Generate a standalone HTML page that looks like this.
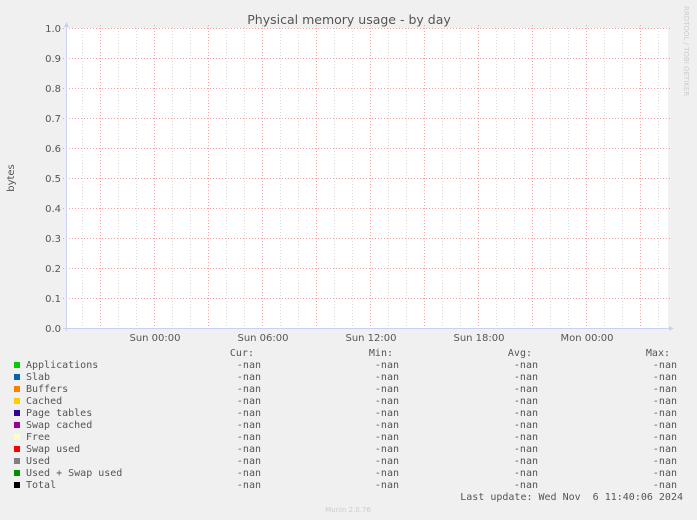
<!DOCTYPE html>
<html><head><meta charset="utf-8"><style>
html,body{margin:0;padding:0;background:#f0f0f0;}
svg{display:block}
.s{font-family:"DejaVu Sans","Liberation Sans",sans-serif;fill:#555}
.m{font-family:"DejaVu Sans Mono","Liberation Mono",monospace;font-size:10px;fill:#555}
</style></head><body>
<svg width="697" height="520" xmlns="http://www.w3.org/2000/svg">
<rect width="697" height="520" fill="#f0f0f0"/>
<rect x="66" y="28" width="602" height="300" fill="#fff"/>
<path d="M82 28V331M118 28V331M136 28V331M172 28V331M190 28V331M226 28V331M244 28V331M280 28V331M298 28V331M334 28V331M352 28V331M388 28V331M406 28V331M442 28V331M460 28V331M496 28V331M514 28V331M550 28V331M568 28V331M604 28V331M622 28V331M658 28V331" stroke="#d8d8d8" stroke-width="1" stroke-dasharray="1,2" fill="none" transform="translate(0.5,0)"/>
<path d="M100 25V331M154 25V331M208 25V331M262 25V331M316 25V331M370 25V331M424 25V331M478 25V331M532 25V331M586 25V331M640 25V331" stroke="#f4a0a0" stroke-width="1" stroke-dasharray="1,2" fill="none" transform="translate(0.5,0)"/>
<path d="M63 28H670M63 58H670M63 88H670M63 118H670M63 148H670M63 178H670M63 208H670M63 238H670M63 268H670M63 298H670M63 328H670" stroke="#f4a0a0" stroke-width="1" stroke-dasharray="1,2" fill="none" transform="translate(0,0.5)"/>
<path d="M66.5 26V331M63 328.5H672" stroke="#ccd0f0" stroke-width="1"/>
<path d="M64 27L66.5 22L69 27Z M669 326L674 328.5L669 331Z" fill="#ccd0f0"/>
<text class="s" x="349" y="24" font-size="12.5" text-anchor="middle">Physical memory usage - by day</text>
<g class="s" font-size="10" text-anchor="end">
<text x="61" y="32">1.0</text><text x="61" y="62">0.9</text><text x="61" y="92">0.8</text><text x="61" y="122">0.7</text><text x="61" y="152">0.6</text><text x="61" y="182">0.5</text><text x="61" y="212">0.4</text><text x="61" y="242">0.3</text><text x="61" y="272">0.2</text><text x="61" y="302">0.1</text><text x="61" y="332">0.0</text>
</g>
<g class="s" font-size="10" text-anchor="middle">
<text x="155" y="341">Sun 00:00</text><text x="263" y="341">Sun 06:00</text><text x="371" y="341">Sun 12:00</text><text x="479" y="341">Sun 18:00</text><text x="587" y="341">Mon 00:00</text>
</g>
<text class="s" font-size="10" transform="translate(14,178) rotate(-90)" text-anchor="middle">bytes</text>
<text class="s" font-size="7" style="fill:#ccc" transform="translate(684,6) rotate(90)">RRDTOOL / TOBI OETIKER</text>
<g class="m" text-anchor="end">
<text x="254" y="356">Cur:</text><text x="393" y="356">Min:</text><text x="532" y="356">Avg:</text><text x="670" y="356">Max:</text>
</g>
<g>
<rect x="14" y="362" width="6" height="6" fill="#00cc00"/>
<rect x="14" y="374" width="6" height="6" fill="#0066b3"/>
<rect x="14" y="386" width="6" height="6" fill="#ff8000"/>
<rect x="14" y="398" width="6" height="6" fill="#ffcc00"/>
<rect x="14" y="410" width="6" height="6" fill="#330099"/>
<rect x="14" y="422" width="6" height="6" fill="#990099"/>
<rect x="14" y="434" width="6" height="6" fill="#ffffcc"/>
<rect x="14" y="446" width="6" height="6" fill="#ff0000"/>
<rect x="14" y="458" width="6" height="6" fill="#808080"/>
<rect x="14" y="470" width="6" height="6" fill="#008f00"/>
<rect x="14" y="482" width="6" height="6" fill="#000000"/>
</g>
<g class="m">
<text x="26" y="368">Applications</text><text x="26" y="380">Slab</text><text x="26" y="392">Buffers</text><text x="26" y="404">Cached</text><text x="26" y="416">Page tables</text><text x="26" y="428">Swap cached</text><text x="26" y="440">Free</text><text x="26" y="452">Swap used</text><text x="26" y="464">Used</text><text x="26" y="476">Used + Swap used</text><text x="26" y="488">Total</text>
</g>
<g class="m" text-anchor="end">
<text x="261" y="368">-nan</text><text x="261" y="380">-nan</text><text x="261" y="392">-nan</text><text x="261" y="404">-nan</text><text x="261" y="416">-nan</text><text x="261" y="428">-nan</text><text x="261" y="440">-nan</text><text x="261" y="452">-nan</text><text x="261" y="464">-nan</text><text x="261" y="476">-nan</text><text x="261" y="488">-nan</text>
<text x="399" y="368">-nan</text><text x="399" y="380">-nan</text><text x="399" y="392">-nan</text><text x="399" y="404">-nan</text><text x="399" y="416">-nan</text><text x="399" y="428">-nan</text><text x="399" y="440">-nan</text><text x="399" y="452">-nan</text><text x="399" y="464">-nan</text><text x="399" y="476">-nan</text><text x="399" y="488">-nan</text>
<text x="538" y="368">-nan</text><text x="538" y="380">-nan</text><text x="538" y="392">-nan</text><text x="538" y="404">-nan</text><text x="538" y="416">-nan</text><text x="538" y="428">-nan</text><text x="538" y="440">-nan</text><text x="538" y="452">-nan</text><text x="538" y="464">-nan</text><text x="538" y="476">-nan</text><text x="538" y="488">-nan</text>
<text x="677" y="368">-nan</text><text x="677" y="380">-nan</text><text x="677" y="392">-nan</text><text x="677" y="404">-nan</text><text x="677" y="416">-nan</text><text x="677" y="428">-nan</text><text x="677" y="440">-nan</text><text x="677" y="452">-nan</text><text x="677" y="464">-nan</text><text x="677" y="476">-nan</text><text x="677" y="488">-nan</text>
<text x="683" y="500" xml:space="preserve">Last update: Wed Nov  6 11:40:06 2024</text>
</g>
<text class="s" x="348" y="512" font-size="7" text-anchor="middle" style="fill:#ccc">Munin 2.0.76</text>
</svg>
</body></html>
